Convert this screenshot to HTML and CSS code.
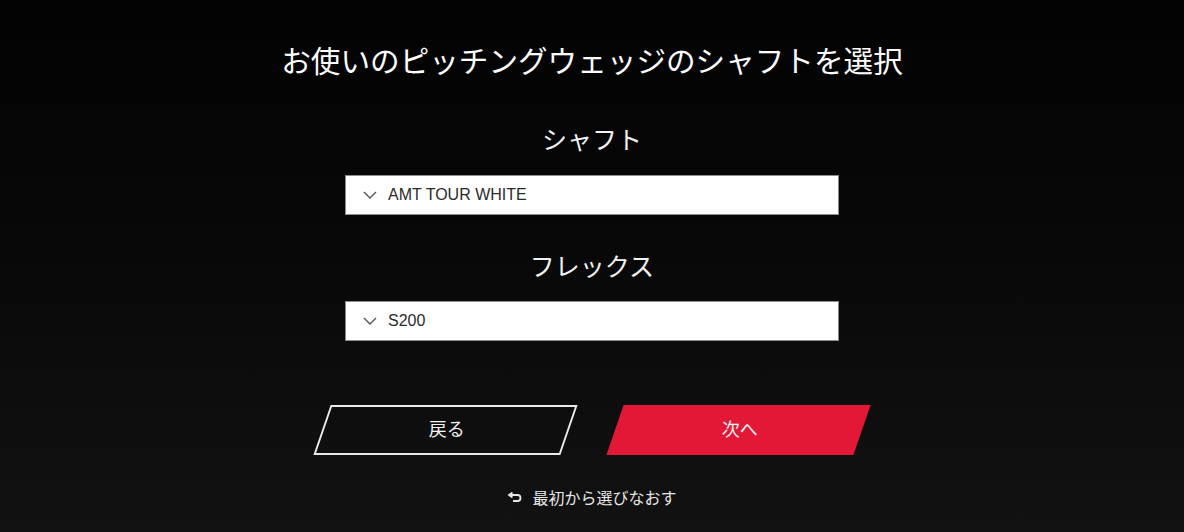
FILE: index.html
```html
<!DOCTYPE html>
<html lang="ja">
<head>
<meta charset="utf-8">
<title>シャフト選択</title>
<link rel="stylesheet" href="styles.css">
</head>
<body>
<main class="page">
  <h1 class="title">お使いのピッチングウェッジのシャフトを選択</h1>

  <section class="field">
    <h2 class="label">シャフト</h2>
    <div class="select">
      <svg class="chev" width="14" height="8" viewBox="0 0 14 8"><path d="M1 1 L7 7 L13 1" fill="none" stroke="#555" stroke-width="1.4"/></svg>
      <span class="value">AMT TOUR WHITE</span>
    </div>
  </section>

  <section class="field field2">
    <h2 class="label">フレックス</h2>
    <div class="select">
      <svg class="chev" width="14" height="8" viewBox="0 0 14 8"><path d="M1 1 L7 7 L13 1" fill="none" stroke="#555" stroke-width="1.4"/></svg>
      <span class="value">S200</span>
    </div>
  </section>

  <div class="actions">
    <button class="btn btn-back"><span class="btn-text">戻る</span></button>
    <button class="btn btn-next"><span class="btn-text">次へ</span></button>
  </div>

  <a class="restart" href="#">
    <svg class="restart-icon" width="15" height="11" viewBox="0 0 15 11"><path d="M3 3 H10.5 Q13.5 3 13.5 6 Q13.5 9 10.5 9 H6" fill="none" stroke="#e6e6e6" stroke-width="1.8"/><path d="M5.5 0.5 L2 3 L5.5 5.5" fill="none" stroke="#e6e6e6" stroke-width="1.8"/></svg>
    <span>最初から選びなおす</span>
  </a>
</main>
</body>
</html>
```

FILE: styles.css
```css
html, body {
  margin: 0;
  padding: 0;
  height: 100%;
}
body {
  background: linear-gradient(180deg, #030303 0%, #070707 40%, #121212 100%);
  color: #fff;
  font-family: "Noto Sans CJK JP", "Noto Sans", sans-serif;
}
.page {
  width: 1184px;
  height: 532px;
  display: flex;
  flex-direction: column;
  align-items: center;
  overflow: hidden;
}
.title {
  margin: 40px 0 0;
  font-size: 29.6px;
  font-weight: 400;
  line-height: 40px;
  color: #fff;
}
.field {
  display: flex;
  flex-direction: column;
  align-items: center;
  margin-top: 40px;
}
.field2 {
  margin-top: 32px;
}
.label {
  margin: 0;
  font-size: 25px;
  font-weight: 400;
  line-height: 36px;
  color: #f2f2f2;
}
.select {
  margin-top: 19px;
  box-sizing: border-box;
  width: 494px;
  height: 40px;
  background: #fff;
  border: 1px solid #8c8c8c;
  display: flex;
  align-items: center;
  padding-left: 17px;
  gap: 11px;
}
.field2 .select {
  margin-top: 18px;
}
.chev {
  display: block;
}
.value {
  font-family: "Liberation Sans", Arial, sans-serif;
  font-size: 16px;
  color: #2a2a2a;
  line-height: 20px;
}
.actions {
  margin-top: 64px;
  display: flex;
  gap: 46px;
  margin-left: -1px;
}
.btn {
  box-sizing: border-box;
  width: 247px;
  height: 50px;
  transform: skewX(-19deg);
  border: none;
  padding: 0 0 4px;
  display: flex;
  align-items: center;
  justify-content: center;
  cursor: pointer;
  font-family: "Noto Sans CJK JP", sans-serif;
}
.btn-back {
  background: transparent;
  border: 2px solid #eaeaea;
}
.btn-next {
  background: #e31837;
}
.btn-text {
  transform: skewX(19deg);
  font-size: 18px;
  color: #f4f4f4;
  line-height: 24px;
}
.restart {
  margin-top: 32px;
  display: flex;
  align-items: center;
  gap: 10px;
  color: #e6e6e6;
  text-decoration: none;
  font-size: 16px;
  line-height: 20px;
}
.restart-icon {
  display: block;
}
```
